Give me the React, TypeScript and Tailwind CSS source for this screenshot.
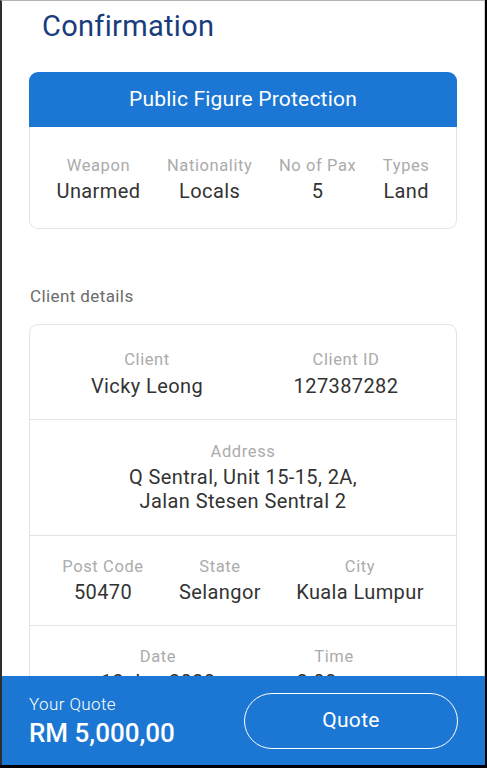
import React from "react";

const font = { fontFamily: "Roboto, 'Noto Sans', sans-serif" };

function Field({ label, value, gap = "mt-[2px]" }: { label: string; value: React.ReactNode; gap?: string }) {
  return (
    <div className="flex flex-col items-center text-center">
      <div className="text-[16.5px] leading-[20px] text-[#ababab] tracking-[0.6px]">{label}</div>
      <div className={"text-[20px] leading-[26px] text-[#333333] tracking-[0.4px] whitespace-nowrap " + gap}>{value}</div>
    </div>
  );
}

export default function App() {
  return (
    <div
      style={font}
      className="relative w-[487px] h-[768px] overflow-hidden bg-black"
    >
      <div className="absolute left-0 top-0 w-[485px] h-[765px] bg-white border-t border-t-[#b3b3b3] border-l-2 border-l-[#2e2e2e] overflow-hidden">
        <div className="absolute right-0 top-0 bottom-0 w-px bg-[#cfcfcf]" />
        <div className="flex flex-col pl-[27px] pr-[28px]">
          <h1 className="text-[29px] leading-[36px] text-[#183c7c] ml-[13px] mt-[7px] tracking-[0.3px]">Confirmation</h1>

          {/* Service card */}
          <div className="mt-[28px] flex flex-col">
            <div className="h-[55px] bg-[#1b77d3] rounded-t-[9px] flex items-center justify-center text-white text-[21px] tracking-[0.2px]">
              Public Figure Protection
            </div>
            <div className="border border-t-0 border-[#e3e3e3] rounded-b-[9px] pt-[29px] pb-[24px] flex justify-evenly">
              <Field label="Weapon" value="Unarmed" />
              <Field label="Nationality" value="Locals" />
              <Field label="No of Pax" value="5" />
              <Field label="Types" value="Land" />
            </div>
          </div>

          <div className="mt-[56px] text-[17px] leading-[22px] text-[#6b6b6b] ml-[1px] tracking-[0.4px]">Client details</div>

          {/* Client card */}
          <div className="mt-[17px] border border-[#e3e3e3] rounded-[9px] flex flex-col">
            <div className="grid grid-cols-[234px_164px] pt-[25px] pb-[20px] border-b border-[#e3e3e3]">
              <Field label="Client" value="Vicky Leong" gap="mt-[3px]" />
              <Field label="Client ID" value="127387282" gap="mt-[3px]" />
            </div>
            <div className="flex flex-col items-center text-center pt-[22px] pb-[22px] border-b border-[#e3e3e3]">
              <div className="text-[16.5px] leading-[20px] text-[#ababab] tracking-[0.6px]">Address</div>
              <div className="text-[20px] leading-[24px] text-[#333333] mt-[3px] tracking-[0.4px]">
                Q Sentral, Unit 15-15, 2A,
                <br />
                Jalan Stesen Sentral 2
              </div>
            </div>
            <div className="grid grid-cols-[146px_88px_1fr] pt-[21px] pb-[20px] border-b border-[#e3e3e3]">
              <Field label="Post Code" value="50470" />
              <Field label="State" value="Selangor" />
              <Field label="City" value="Kuala Lumpur" />
            </div>
            <div className="grid grid-cols-[256px_96px] pt-[21px] pb-[20px]">
              <Field label="Date" value="12 Jan 2020" />
              <Field label="Time" value="2:00 pm" />
            </div>
          </div>
        </div>

        {/* Footer */}
        <div className="absolute left-0 right-0 bottom-0 h-[89px] bg-[#1b77d3] flex items-center justify-between pl-[27px] pr-[27px]">
          <div className="flex flex-col text-white">
            <div className="text-[17px] leading-[22px] font-light tracking-[0.4px]">Your Quote</div>
            <div className="text-[26px] leading-[32px] font-medium mt-[2px]">RM 5,000,00</div>
          </div>
          <button className="w-[214px] h-[56px] rounded-full border-[1.5px] border-white text-white text-[21px] tracking-[0.3px]">
            Quote
          </button>
        </div>
      </div>
    </div>
  );
}
